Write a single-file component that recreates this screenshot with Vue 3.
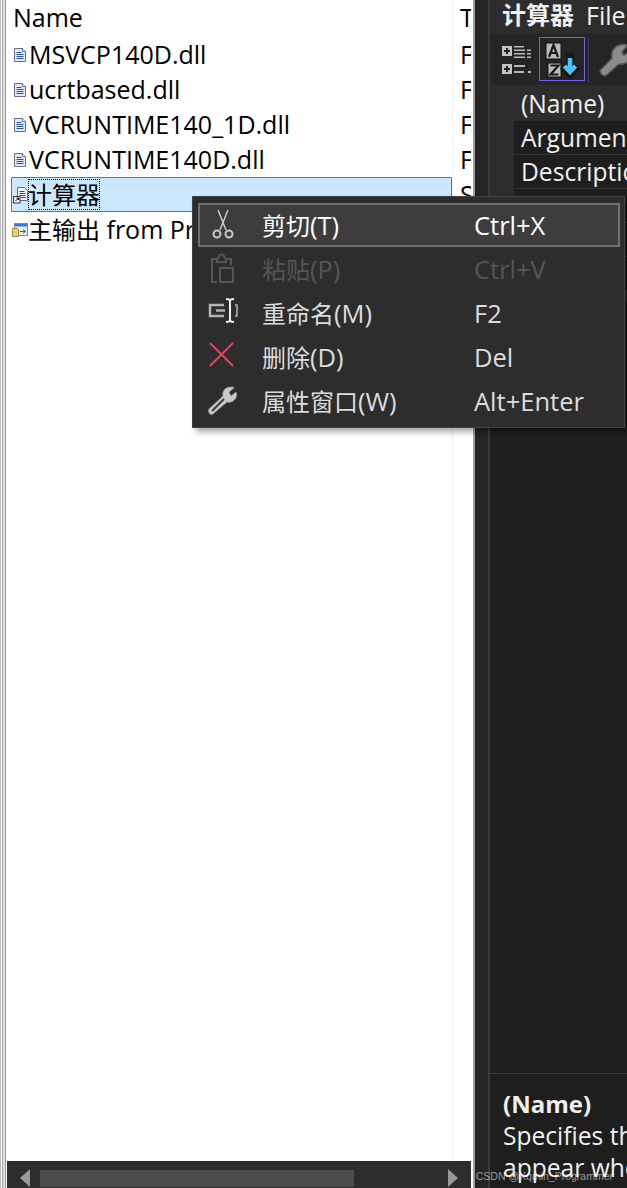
<script setup>
const files = [
  { name: 'MSVCP140D.dll', t: 'F' },
  { name: 'ucrtbased.dll', t: 'F' },
  { name: 'VCRUNTIME140_1D.dll', t: 'F' },
  { name: 'VCRUNTIME140D.dll', t: 'F' }
]
const props = ['Argumen', 'Descriptio']
</script>

<template>
  <div class="root">
    <div class="edge"></div>
    <div class="left">
      <div class="list">
        <div class="names">
          <div class="head">Name</div>
          <div v-for="f in files" :key="f.name" class="row">
            <svg class="ficon" width="16" height="18" viewBox="0 0 16 18">
              <path d="M2.500 2.500h8l3 3v10h-11z" fill="#e4e9f3" stroke="#5f7095"/>
              <path d="M10.500 2.500v3h3" fill="#fff" stroke="#5f7095"/>
              <path d="M4.500 6.500h5M4.500 8.500h7M4.500 10.500h7M4.500 12.500h7" stroke="#2450a8"/>
            </svg>
            <span>{{ f.name }}</span>
          </div>
          <div class="row selected">
            <svg class="ficon" width="16" height="18" viewBox="0 0 16 18">
              <path d="M4.500 1.500h7l3 3v10h-10z" fill="#f4f7fc" stroke="#5f7095"/>
              <path d="M6.500 5.500h5M6.500 7.500h6M6.500 9.500h6M8 11.500h5" stroke="#1f4fd0"/>
              <rect x=".5" y="10.500" width="6.500" height="6.500" fill="#fff" stroke="#333"/>
              <path d="M2.500 15l3-3M3.500 12h2v2" stroke="#000" fill="none"/>
            </svg>
            <span class="focus cjk">计算器</span>
          </div>
          <div class="row output">
            <svg class="ficon" width="16" height="18" viewBox="0 0 16 18">
              <rect x="2.500" y="2.500" width="13" height="12" fill="#e8eef8" stroke="#7088b8"/>
              <rect x="3" y="3" width="12" height="2.500" fill="#3c78c8"/>
              <path d="M.5 7.500h5l1 1v7h-6z" fill="#e8d070" stroke="#a08a40"/>
              <path d="M8 10.500h5M11 8.500l2.500 2-2.500 2" stroke="#2b62b8" fill="none"/>
            </svg>
            <span><span class="cjk">主输出</span> from Pr</span>
          </div>
        </div>
        <div class="types">
          <div class="head">T</div>
          <div v-for="(f, i) in files" :key="i" class="row">{{ f.t }}</div>
          <div class="row">S</div>
        </div>
      </div>
      <div class="hscroll">
        <svg class="arrow" width="10" height="18" viewBox="0 0 10 18"><path d="M10 0v18L0 9z" fill="#999"/></svg>
        <div class="track"><div class="thumb"></div></div>
        <svg class="arrow" width="10" height="18" viewBox="0 0 10 18"><path d="M0 0v18l10-9z" fill="#999"/></svg>
      </div>
    </div>

    <div class="right">
      <div class="strip"></div>
      <div class="inner">
        <div class="title"><b class="cjk">计算器</b><span>File</span></div>
        <div class="toolbar">
          <svg class="tcat" width="30" height="30" viewBox="0 0 30 30">
            <rect x="0" y="0" width="10" height="10" fill="#c4c4c4"/>
            <rect x="0" y="18" width="10" height="10" fill="#c4c4c4"/>
            <path d="M2 5h6M5 2v6M2 23h6M5 20v6" stroke="#222" stroke-width="2"/>
            <path d="M12 0h10v1.500H12zM12 3.500h11v1.500H12zM25 3.500h4v1.500h-4zM12 7h11v1.500H12zM25 7h4v1.500h-4zM12 10.500h11V12H12zM25 10.500h4V12h-4zM12 19h11v2H12zM12 25h10v2H12zM26 25h3v2h-3z" fill="#b8b8b8"/>
          </svg>
          <div class="az">
            <svg width="44" height="42" viewBox="0 0 44 42">
              <rect x="6" y="5" width="15" height="16" fill="#bbb" stroke="#111"/>
              <rect x="8" y="25" width="13" height="14" fill="#bbb" stroke="#111"/>
              <path d="M9 19l4.500-12 4.500 12M10.500 15h6M10.500 27.500h8l-8 9h8" stroke="#1a1a1a" stroke-width="2.200" fill="none"/>
              <path d="M30 15v21M23 28l7 8 7-8" stroke="#171717" stroke-width="8" fill="none"/>
              <path d="M30 20v14M24.500 28l5.500 6 5.500-6" stroke="#4fc1ff" stroke-width="4.500" fill="none"/>
            </svg>
          </div>
          <div class="tsep"></div>
          <svg class="tkey" width="32" height="36" viewBox="0 0 32 36">
            <path d="M3 29.500L15 17c-1-5 0-9 5-12 4-2 8-2 11-1l-6 7 2 3 7-4v6c-2 5-7 8-12 7L9 34.500c-2 1-5 0-6-5z" fill="#8c8c8c" stroke="#555" stroke-width="1.500"/>
          </svg>
        </div>
        <div class="grid">
          <div class="prow first"><span>(Name)</span></div>
          <div class="rows">
            <div v-for="p in props" :key="p" class="prow"><span>{{ p }}</span></div>
            <div class="prow"></div>
            <div class="prow"></div>
            <div class="prow"></div>
          </div>
        </div>
        <div class="desc">
          <b>(Name)</b>
          <div>Specifies th</div>
          <div>appear whe</div>
        </div>
      </div>
    </div>

    <div class="menu">
      <div class="item active">
        <svg class="micon" width="28" height="32" viewBox="0 0 28 32">
          <path d="M11 1l8 20M21 1l-8 20" stroke="#c8c8c8" stroke-width="1.500" fill="none"/>
          <circle cx="10" cy="25" r="3.500" fill="none" stroke="#c8c8c8" stroke-width="2"/>
          <circle cx="22" cy="25" r="3.500" fill="none" stroke="#c8c8c8" stroke-width="2"/>
        </svg>
        <span class="label"><span class="cjk">剪切</span>(T)</span><span class="key">Ctrl+X</span>
      </div>
      <div class="item disabled">
        <svg class="micon" width="30" height="32" viewBox="0 0 30 32">
          <path d="M20 6h4v6M10 29H5V6h5M10 7c0-2 2-2 2-4s5-2 5 0 2 2 2 4v2h-9z" fill="none" stroke="#555" stroke-width="2"/>
          <rect x="13" y="15" width="13" height="14" fill="none" stroke="#555" stroke-width="2"/>
        </svg>
        <span class="label"><span class="cjk">粘贴</span>(P)</span><span class="key">Ctrl+V</span>
      </div>
      <div class="item">
        <svg class="micon" width="32" height="32" viewBox="0 0 32 32">
          <path d="M17 8H3v11h14M9 13.500h9" fill="none" stroke="#b4b4b4" stroke-width="2.400"/>
          <path d="M19 2c3 0 4 1 4 2v19c0 1-1 2-4 2M27 2c-3 0-4 1-4 2v19c0 1 1 2 4 2" fill="none" stroke="#f0f0f0" stroke-width="2"/>
          <path d="M28 8h2v11h-2" fill="none" stroke="#b4b4b4" stroke-width="1.500"/>
        </svg>
        <span class="label"><span class="cjk">重命名</span>(M)</span><span class="key">F2</span>
      </div>
      <div class="item">
        <svg class="micon" width="30" height="32" viewBox="0 0 30 32">
          <path d="M3 2l23 23M26 2L3 25" stroke="#e04c5f" stroke-width="1.800"/>
        </svg>
        <span class="label"><span class="cjk">删除</span>(D)</span><span class="key">Del</span>
      </div>
      <div class="item">
        <svg class="micon" width="32" height="32" viewBox="0 0 32 32">
          <path d="M2 24L16 11c-1-5 2-9 8-9 2 0 3 0 3 1l-5 4 2 4 5-4c2 4-1 9-5 10-2 1-3 0-4 0L6 29c-2 2-6-2-4-5z" fill="#c8c8c8" stroke="#999" stroke-width=".6"/>
          <path d="M5 26L17 14" stroke="#3a3a3a" stroke-width="2"/>
        </svg>
        <span class="label"><span class="cjk">属性窗口</span>(W)</span><span class="key">Alt+Enter</span>
      </div>
    </div>

    <div class="mark">CSDN @Xqmin_Programmer</div>
  </div>
</template>

<style>
html, body { margin: 0; background: #fff; overflow: hidden; }
</style>

<style scoped>
.root {
  position: relative;
  display: flex;
  width: 627px;
  height: 1188px;
  overflow: hidden;
  font-family: "Open Sans", "Noto Sans CJK SC", sans-serif;
  font-size: 25px;
  color: #000;
  background: #fff;
}
.cjk { font-size: 24px; }
.edge {
  width: 7px;
  flex: none;
  background: linear-gradient(90deg, #bbb 0 1px, #fff 1px 2px, #aaa 2px 3px, #ddd 3px 5px, #999 5px 6px, #fff 6px);
}
.left { width: 464px; flex: none; display: flex; flex-direction: column; }
.list { flex: 1; display: flex; min-height: 0; }
.names { width: 446px; flex: none; box-sizing: border-box; border-right: 1px solid #eef0f6; }
.types { flex: 1; padding-left: 7px; overflow: hidden; }
.head { height: 37px; line-height: 35px; padding-left: 6px; }
.types .head, .types .row { padding-left: 0; }
.row {
  height: 35px;
  line-height: 35px;
  display: flex;
  align-items: center;
  padding-left: 6px;
  white-space: nowrap;
}
.types .row { display: block; }
.ficon { flex: none; margin-right: 1px; margin-left: -1px; }
.output .ficon { margin-right: 0; }
.selected {
  box-sizing: border-box;
  margin-left: 4px;
  padding-left: 2px;
  background: #cce8ff;
  border: 1px solid #2a82d0;
  border-radius: 1px;
}
.selected .ficon { margin-right: -1px; }
.focus { outline: 1px dotted #000; outline-offset: -1px; line-height: 31px; height: 31px; }
.hscroll {
  height: 27px;
  flex: none;
  background: #2d2d2d;
  display: flex;
  align-items: flex-end;
  padding: 0 13px 1px 13px;
  gap: 10px;
  box-sizing: border-box;
}
.arrow { flex: none; }
.track { flex: 1; height: 17px; }
.thumb { width: 314px; height: 17px; background: #4d4d4d; }
.right {
  flex: 1;
  min-width: 0;
  margin-left: 2px;
  display: flex;
  background: #252526;
  color: #f0f0f0;
  border-left: 2px solid #a0a0a0;
  box-sizing: border-box;
  overflow: hidden;
}
.strip { width: 13px; flex: none; }
.inner {
  flex: 1;
  min-width: 0;
  display: flex;
  flex-direction: column;
  background: #2d2d2d;
  border-left: 2px solid #3a3a3a;
}
.title {
  height: 34px;
  flex: none;
  line-height: 30px;
  padding-left: 12px;
  white-space: nowrap;
  display: flex;
  gap: 12px;
}
.title b { font-weight: 700; }
.toolbar {
  height: 51px;
  flex: none;
  background: #252526;
  display: flex;
  align-items: center;
  padding-left: 12px;
  box-sizing: border-box;
}
.tcat { margin-top: 2px; flex: none; }
.az { width: 46px; height: 44px; box-sizing: border-box; border: 1px solid #7160e8; flex: none; margin-left: 7px; margin-top: -2px; }
.tsep { width: 1px; height: 44px; background: #3f3f46; flex: none; margin: 0 8px 0 3px; }
.tkey { flex: none; margin-top: -2px; }
.grid {
  flex: 1;
  background: #1e1e1e;
  display: flex;
  flex-direction: column;
  min-height: 0;
  font-size: 24.6px;
}
.rows {
  flex: none;
  background: #2d2d2d;
  height: 180px;
}
.prow {
  height: 34px;
  box-sizing: border-box;
  padding-left: 7px;
  margin-left: 24px;
  line-height: 33px;
  background: #1e1e1e;
  border-bottom: 1px solid #333;
  white-space: nowrap;
  overflow: hidden;
}
.prow.first { background: #2d2d2d; flex: none; margin-left: 0; padding-left: 31px; height: 36px; line-height: 38px; border: 0; }
.desc {
  height: 115px;
  flex: none;
  box-sizing: border-box;
  background: #1e1e1e;
  border-top: 1px solid #3a3a3a;
  padding: 13px 0 0 13px;
  white-space: nowrap;
  line-height: 32px;
  font-size: 24.6px;
}
.desc b { display: block; font-weight: 700; line-height: 33px; font-size: 24px; }
.menu {
  position: absolute;
  left: 192px;
  top: 196px;
  width: 433px;
  height: 232px;
  box-sizing: border-box;
  padding: 6px 4px 0 5px;
  background: #2d2d2d;
  border: 1px solid #434346;
  box-shadow: 4px 4px 6px rgba(0, 0, 0, .35);
  color: #dcdcdc;
  font-size: 25.5px;
}
.item {
  height: 44px;
  display: flex;
  align-items: center;
  box-sizing: border-box;
  border: 1px solid transparent;
  position: relative;
  padding-left: 63px;
  line-height: 40px;
}
.item.active { background: #3d3d3d; border: 2px solid #6f6f6f; color: #fff; padding-left: 62px; }
.item.disabled { color: #555; }
.micon { position: absolute; left: 8px; top: 5px; }
.item.active .micon { left: 7px; top: 4px; }
.label { width: 212px; flex: none; white-space: nowrap; }
.key { white-space: nowrap; }
.mark {
  position: absolute;
  right: 14px;
  bottom: 5px;
  font-size: 10.500px;
  line-height: 14px;
  color: rgba(255, 255, 255, .55);
  font-family: "Liberation Sans", sans-serif;
}
</style>
